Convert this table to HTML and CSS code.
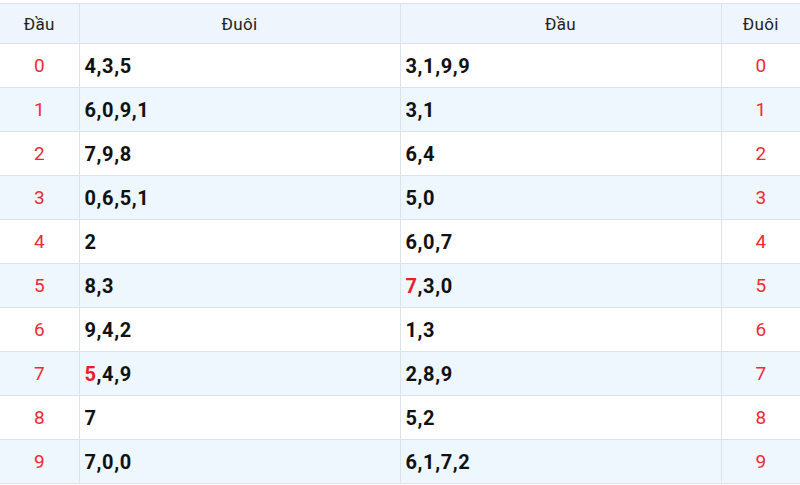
FILE: index.html
```html
<!DOCTYPE html>
<html lang="vi">
<head>
<meta charset="utf-8">
<link rel="stylesheet" href="styles.css">
</head>
<body>
<table class="loto">
  <colgroup>
    <col class="c-num"><col class="c-data"><col class="c-data"><col class="c-num">
  </colgroup>
  <thead>
    <tr><th>Đầu</th><th>Đuôi</th><th>Đầu</th><th>Đuôi</th></tr>
  </thead>
  <tbody>
    <tr><td class="num">0</td><td class="data">4,3,5</td><td class="data">3,1,9,9</td><td class="num">0</td></tr>
    <tr class="alt"><td class="num">1</td><td class="data">6,0,9,1</td><td class="data">3,1</td><td class="num">1</td></tr>
    <tr><td class="num">2</td><td class="data">7,9,8</td><td class="data">6,4</td><td class="num">2</td></tr>
    <tr class="alt"><td class="num">3</td><td class="data">0,6,5,1</td><td class="data">5,0</td><td class="num">3</td></tr>
    <tr><td class="num">4</td><td class="data">2</td><td class="data">6,0,7</td><td class="num">4</td></tr>
    <tr class="alt"><td class="num">5</td><td class="data">8,3</td><td class="data"><span class="hl">7</span>,3,0</td><td class="num">5</td></tr>
    <tr><td class="num">6</td><td class="data">9,4,2</td><td class="data">1,3</td><td class="num">6</td></tr>
    <tr class="alt"><td class="num">7</td><td class="data"><span class="hl">5</span>,4,9</td><td class="data">2,8,9</td><td class="num">7</td></tr>
    <tr><td class="num">8</td><td class="data">7</td><td class="data">5,2</td><td class="num">8</td></tr>
    <tr class="alt"><td class="num">9</td><td class="data">7,0,0</td><td class="data">6,1,7,2</td><td class="num">9</td></tr>
  </tbody>
</table>
</body>
</html>
```

FILE: styles.css
```css
html, body {
  margin: 0;
  padding: 0;
  background: #ffffff;
}
body {
  padding-top: 3px;
  font-family: Roboto, "Liberation Sans", Arial, sans-serif;
}
.loto {
  width: 800px;
  border-collapse: collapse;
  table-layout: fixed;
}
.c-num { width: 79px; }
.c-data { width: 321px; }
.loto th,
.loto td {
  border-top: 1px solid #dde3ea;
  border-bottom: 1px solid #dde3ea;
  border-left: 1px solid #dde3ea;
  padding: 0;
}
.loto th:first-child,
.loto td:first-child {
  border-left: none;
}
.loto th {
  height: 39px;
  background: #eef5fd;
  font-weight: 400;
  font-size: 17px;
  letter-spacing: 0.3px;
  color: #222222;
  text-align: center;
  vertical-align: middle;
}
.loto td {
  height: 43px;
  vertical-align: middle;
}
.loto tr.alt td {
  background: #eef6fe;
}
.num {
  text-align: center;
  color: #ee2a33;
  font-size: 19px;
  font-weight: 400;
}
.data {
  text-align: left;
  padding-left: 5px !important;
  font-size: 20px;
  letter-spacing: 0.6px;
  font-weight: 700;
  color: #111111;
}
.hl {
  color: #ee1c25;
}
```
